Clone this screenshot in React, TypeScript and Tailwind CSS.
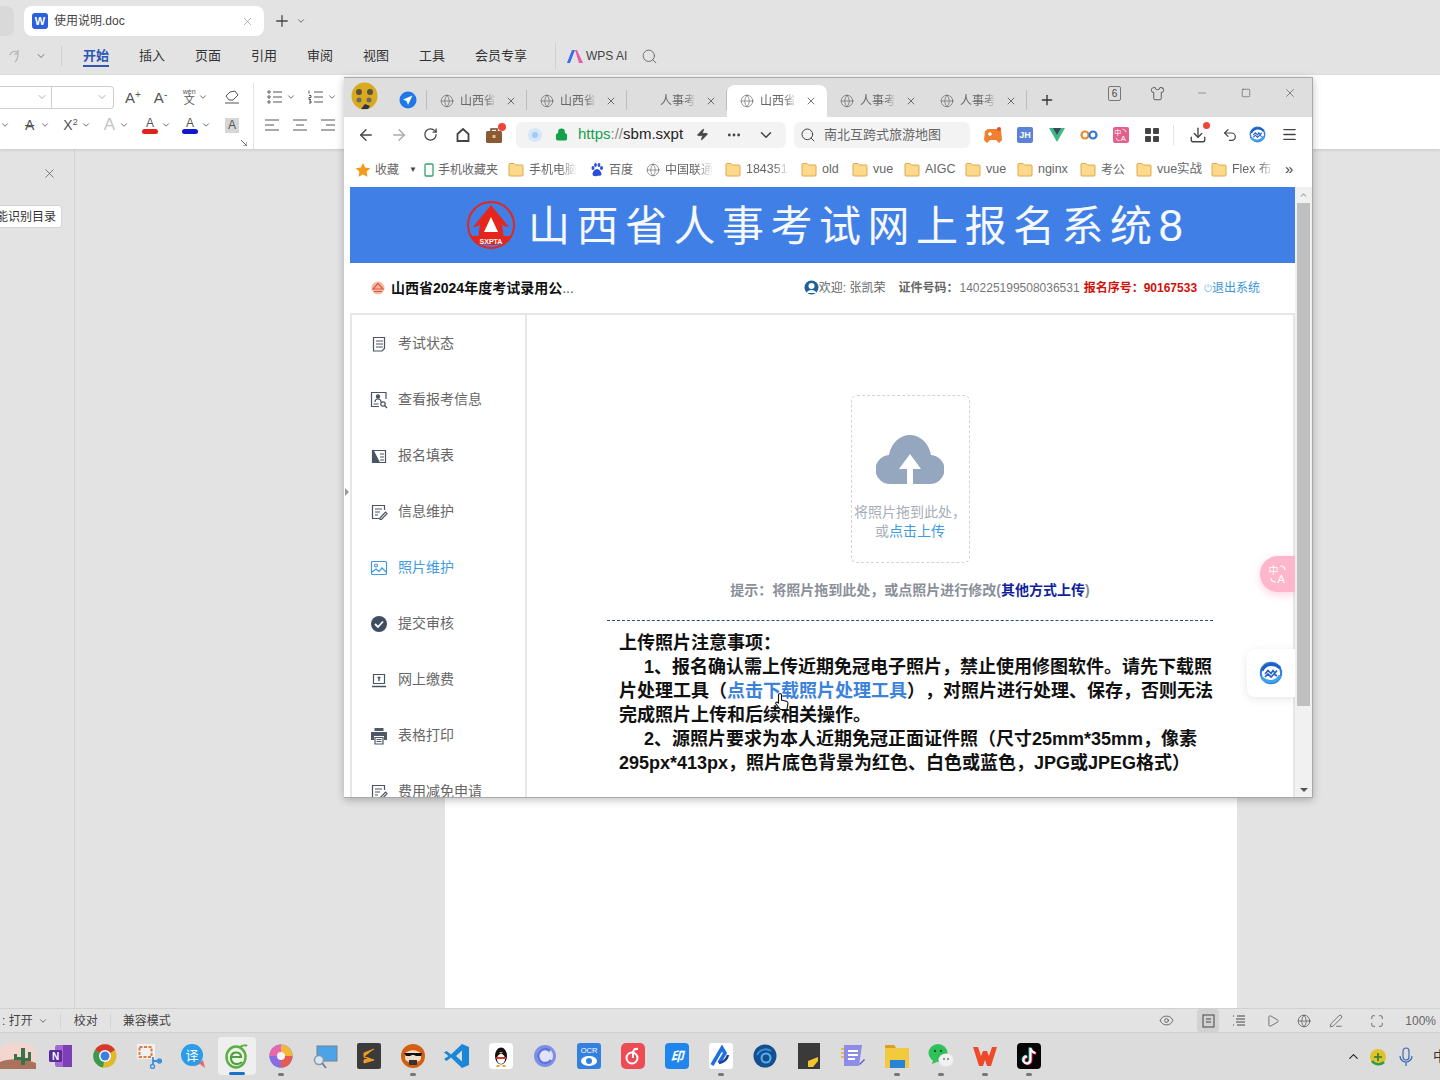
import type { ReactNode } from 'react';
import {
  ArrowLeft, ArrowRight, ChevronDown, ChevronUp, Download, Ellipsis, Eye, Globe, Lock, Maximize, Menu, Minus,
  PenLine, Play, Plus, RotateCw, Search, Shirt, Square, Undo2, X, Zap,
} from 'lucide-react';

const font = "font-['Liberation_Sans','Noto_Sans_CJK_SC',sans-serif] [text-spacing-trim:space-all]";

const ribbonTabs = [
  { label: '开始', width: 'w-[56px]' },
  { label: '插入', width: 'w-[56px]' },
  { label: '页面', width: 'w-[56px]' },
  { label: '引用', width: 'w-[56px]' },
  { label: '审阅', width: 'w-[56px]' },
  { label: '视图', width: 'w-[56px]' },
  { label: '工具', width: 'w-[56px]' },
  { label: '会员专享', width: 'w-[70px]' },
];

const Chev = () => <ChevronDown size={10} strokeWidth={2} className="text-[#555]" />;

const Lines = ({ kind }: { kind: 'bullet' | 'number' | 'left' | 'center' | 'right' }) => (
  <svg width="16" height="14" viewBox="0 0 16 14" fill="none" stroke="#555" strokeWidth="1">
    {kind === 'bullet' && (
      <>
        <circle cx="2" cy="2" r="1.2" /><circle cx="2" cy="7" r="1.2" /><circle cx="2" cy="12" r="1.2" />
        <path d="M6 2h9M6 7h9M6 12h9" />
      </>
    )}
    {kind === 'number' && (
      <>
        <path d="M1 0.5v3M1 5.5h2v2H1v2h2M1 11h2v2H1" />
        <path d="M6 2h9M6 7h9M6 12h9" />
      </>
    )}
    {kind === 'left' && <path d="M1 2h14M1 7h9M1 12h14" />}
    {kind === 'center' && <path d="M1 2h14M4 7h8M1 12h14" />}
    {kind === 'right' && <path d="M1 2h14M6 7h9M1 12h14" />}
  </svg>
);

const Folder = () => (
  <svg width="16" height="15" viewBox="0 0 16 15" className="shrink-0">
    <path d="M1 2.500a1 1 0 0 1 1-1h4l1.500 1.500H14a1 1 0 0 1 1 1v9a1 1 0 0 1-1 1H2a1 1 0 0 1-1-1z" fill="#fdd98c" stroke="#e0a84a" />
  </svg>
);

const Translate = ({ color, size }: { color: string; size: number }) => (
  <svg width={size} height={size} viewBox="0 0 20 20" fill="none">
    <text x="0.500" y="9.500" fontSize="10" fill={color}>中</text>
    <text x="9.500" y="19" fontSize="11" fill={color}>A</text>
    <path d="M12 2c3 0 5 1.500 5 4M8 18c-3 0-5-1.500-5-4" stroke={color} strokeWidth="1.200" />
  </svg>
);

// each item is as wide as the distance to the next bookmark
const bookmarks: { label: string; width: string; labelWidth?: string; latin?: boolean; icon: ReactNode }[] = [
  { label: '手机电脑', width: 'w-[82px]', labelWidth: 'w-[48px]', icon: <Folder /> },
  {
    label: '百度', width: 'w-[56px]', icon: (
      <svg width="14" height="14" viewBox="0 0 14 14" fill="#2b4fd8" className="shrink-0">
        <ellipse cx="3" cy="5" rx="1.500" ry="2" /><ellipse cx="5.500" cy="2" rx="1.400" ry="1.900" /><ellipse cx="9" cy="2" rx="1.400" ry="1.900" /><ellipse cx="11.500" cy="5" rx="1.500" ry="2" />
        <path d="M7 6c-2 0-4.500 3-4.500 5 0 2 2 2.500 4.500 2s4.500 0 4.500-2c0-2-2.500-5-4.500-5z" />
      </svg>
    ),
  },
  { label: '中国联通', width: 'w-[79px]', labelWidth: 'w-[48px]', icon: <Globe size={14} strokeWidth={1} className="text-[#555] shrink-0" /> },
  { label: '184351', width: 'w-[76px]', labelWidth: 'w-[43px]', latin: true, icon: <Folder /> },
  { label: 'old', width: 'w-[51px]', latin: true, icon: <Folder /> },
  { label: 'vue', width: 'w-[52px]', latin: true, icon: <Folder /> },
  { label: 'AIGC', width: 'w-[61px]', latin: true, icon: <Folder /> },
  { label: 'vue', width: 'w-[52px]', latin: true, icon: <Folder /> },
  { label: 'nginx', width: 'w-[63px]', latin: true, icon: <Folder /> },
  { label: '考公', width: 'w-[56px]', icon: <Folder /> },
  { label: 'vue实战', width: 'w-[75px]', latin: true, icon: <Folder /> },
  { label: 'Flex 布', width: 'w-[74px]', labelWidth: 'w-[42px]', latin: true, icon: <Folder /> },
];

const browserTabs = [
  { label: '山西省', globe: true, sep: true },
  { label: '山西省', globe: true, sep: true },
  { label: '人事考', globe: false, sep: true },
  { label: '山西省', globe: true, active: true },
  { label: '人事考', globe: true },
  { label: '人事考', globe: true, sep: true },
];

const side = (children: ReactNode) => (
  <svg width="18" height="18" viewBox="0 0 18 18" fill="none" stroke="currentColor" strokeWidth="1.2">{children}</svg>
);

const menu: { label: string; active?: boolean; icon: ReactNode }[] = [
  { label: '考试状态', icon: side(<><path d="M3.500 2.500h11v11l-2.500 2.500H3.500z" /><path d="M6 6h7M6 9h7M6 12h7" /></>) },
  {
    label: '查看报考信息', icon: side(
      <>
        <path d="M16 8V1.500H1.500v14H9" />
        <circle cx="8" cy="5.500" r="1.600" fill="currentColor" />
        <path d="M5 11c0-4 6-4 6 0M3.500 13h5" />
        <circle cx="13" cy="13" r="2.200" /><path d="M14.500 14.500 17 17" />
      </>,
    ),
  },
  { label: '报名填表', icon: side(<><path d="M2.500 3.500h13v12h-13z" /><path d="M3 3l6 12H3z" fill="currentColor" /><path d="M10 7h4M10 10h4M10 13h4" /></>) },
  { label: '信息维护', icon: side(<><path d="M14.500 7V2.500h-12v13h7" /><path d="M5 6h7M5 9h5M5 12h3" /><path d="m10 15 5.500-6 1.500 1.500-5.500 6H10z" /></>) },
  { label: '照片维护', active: true, icon: side(<><rect x="1.500" y="2.500" width="15" height="13" rx="1" /><circle cx="6" cy="6.500" r="1.500" /><path d="m2 13 4-3 3 2.500 3-3.500 4 4" /></>) },
  {
    label: '提交审核', icon: (
      <svg width="18" height="18" viewBox="0 0 18 18"><circle cx="9" cy="9" r="8" fill="#3f4d63" /><path d="m5 9 3 3 5-5.500" fill="none" stroke="#fff" strokeWidth="1.800" /></svg>
    ),
  },
  { label: '网上缴费', icon: side(<><path d="M3.500 3.500h11v9h-11z" /><path d="M2 15.500h14" strokeWidth="1.500" /><path d="M9 6v4M7.500 6.500h3" strokeWidth="1.500" /></>) },
  {
    label: '表格打印', icon: (
      <svg width="18" height="18" viewBox="0 0 18 18" fill="#4d5868">
        <path d="M4.500 1h9v3h-9z" /><path d="M1 5h16v8h-3V9H4v4H1z" />
        <path d="M5 10.500h8v6.500H5z" fill="none" stroke="#4d5868" strokeWidth="1.200" /><path d="M6.500 12.500h5M6.500 14.500h5" stroke="#4d5868" />
      </svg>
    ),
  },
  { label: '费用减免申请', icon: side(<><path d="M14.500 7V2.500h-12v13h7" /><path d="M5 6h7M5 9h5M5 12h3" /><path d="m10 15 5.500-6 1.500 1.500-5.500 6H10z" /></>) },
];

const BlueLogo = ({ size }: { size: number }) => (
  <svg width={size} height={size} viewBox="0 0 24 24" fill="none">
    <circle cx="12" cy="12" r="10.200" stroke="#2f7fe0" strokeWidth="2" />
    <path d="M3 9.500C6 3 15 1 21 7" stroke="#1c5fc9" strokeWidth="3" />
    <path d="M21 14.500C18 21 9 23 3 17" stroke="#3fa3ea" strokeWidth="3" />
    <path d="m6 13 3-3.500 3 3 2-3 2 2.500 2-2.500M6 16l3-3 3 3 3-3 3 2" stroke="#2560c8" strokeWidth="1.600" />
  </svg>
);

const dock: { dot?: boolean; active?: boolean; icon: ReactNode }[] = [
  {
    icon: (
      <svg width="38" height="26" viewBox="0 0 38 26">
        <rect width="38" height="26" rx="13" fill="#f2d6cf" />
        <path d="M0 20c8-5 25-5 38 0v6H0z" fill="#a8725c" />
        <path d="M23 22V5h4v17zM19 14h4v3h-7v-6h3zM27 15h3v-6h3v9h-6z" fill="#3c7048" />
      </svg>
    ),
  },
  {
    icon: (
      <svg width="26" height="26" viewBox="0 0 26 26">
        <rect x="7" y="2" width="17" height="22" rx="2" fill="#a46ad0" /><rect x="15" y="2" width="9" height="22" fill="#7c3fb5" />
        <rect x="1" y="7" width="13" height="12" rx="1.500" fill="#5c2a9d" />
        <text x="7.500" y="16.500" fontSize="10" fontWeight="700" fill="#fff" textAnchor="middle">N</text>
      </svg>
    ),
  },
  {
    icon: (
      <svg width="26" height="26" viewBox="0 0 26 26">
        <circle cx="13" cy="13" r="11.500" fill="#e0b92c" />
        <path d="M13 13 3 7A11.500 11.500 0 0 1 23 7z" fill="#d6392c" />
        <path d="M13 13 3 7a11.500 11.500 0 0 0 8 17.500z" fill="#3c9a4e" />
        <circle cx="13" cy="13" r="6" fill="#fff" /><circle cx="13" cy="13" r="4.500" fill="#3d7fe0" />
      </svg>
    ),
  },
  {
    icon: (
      <svg width="26" height="26" viewBox="0 0 26 26" fill="none">
        <rect x="1" y="1" width="18" height="15" fill="#f1f1f1" />
        <rect x="3.500" y="4" width="12" height="10" stroke="#e07b3c" strokeWidth="2" strokeDasharray="3 1.500" />
        <path d="M17 14v8M17 18h8" stroke="#3c8ed8" strokeWidth="1.800" /><circle cx="16.500" cy="23.500" r="2" stroke="#3c8ed8" strokeWidth="1.300" /><circle cx="23.500" cy="18" r="2" stroke="#3c8ed8" strokeWidth="1.300" />
      </svg>
    ),
  },
  {
    icon: (
      <svg width="26" height="26" viewBox="0 0 26 26">
        <path d="M13 24 20 21 25 25 23 17z" fill="#e06a6a" /><circle cx="12" cy="12" r="11" fill="#2a9ce8" />
        <text x="12" y="17" fontSize="13" fill="#fff" textAnchor="middle">译</text>
      </svg>
    ),
  },
  {
    active: true, icon: (
      <svg width="24" height="26" viewBox="0 0 24 26" fill="none">
        <ellipse cx="11" cy="14" rx="9.500" ry="10.500" fill="#eef6e8" stroke="#5dae46" strokeWidth="2.500" />
        <path d="M6 14h10c0-6-9-6-10 0zm0 1c0 6 6 8 11 4" stroke="#4f9f3c" strokeWidth="2.200" />
        <path d="M15 4c3-2 6-2 7-1" stroke="#5dae46" strokeWidth="2" />
      </svg>
    ),
  },
  {
    dot: true, icon: (
      <svg width="26" height="26" viewBox="0 0 26 26">
        <circle cx="13" cy="13" r="11.500" fill="#3a8be8" />
        <path d="M13 13V1.500A11.500 11.500 0 0 1 24.500 13z" fill="#f2b638" />
        <path d="M13 13h11.500A11.500 11.500 0 0 1 13 24.500z" fill="#e85a50" />
        <path d="M13 13v11.500A11.500 11.500 0 0 1 1.500 13z" fill="#8c6be0" />
        <path d="M13 13H1.500A11.500 11.500 0 0 1 13 1.500z" fill="#e868b0" />
        <circle cx="13" cy="13" r="4" fill="#f4f4f4" />
      </svg>
    ),
  },
  {
    icon: (
      <svg width="26" height="26" viewBox="0 0 26 26" fill="none">
        <rect x="5" y="3" width="20" height="15" fill="#4ba3e8" stroke="#78808a" />
        <circle cx="7" cy="17" r="4.500" fill="#d7e8f5" stroke="#8a97a3" strokeWidth="1.500" /><path d="m10 20 4 5" stroke="#77828d" strokeWidth="2" />
      </svg>
    ),
  },
  {
    icon: (
      <svg width="26" height="26" viewBox="0 0 26 26">
        <rect x="1" y="0" width="24" height="26" rx="2" fill="#3b3b3b" />
        <path d="M18 6 8 10v4l10 3-10 3v-3l6-1.500L8 14" fill="#f39c1f" stroke="#f39c1f" strokeWidth="1" />
      </svg>
    ),
  },
  {
    dot: true, icon: (
      <svg width="26" height="26" viewBox="0 0 26 26">
        <circle cx="13" cy="13" r="12" fill="#d4600f" /><path d="M5 11c3-5 13-5 16 0v5c-3 5-13 5-16 0z" fill="#f0dcc8" />
        <path d="M4 10h18l-1 3h-5l-2-1h-2l-2 1H6z" fill="#111" /><rect x="9" y="17" width="8" height="5" fill="#333" />
      </svg>
    ),
  },
  {
    icon: (
      <svg width="26" height="26" viewBox="0 0 26 26">
        <path d="M18 1l7 3v18l-7 3-11-10.500-4.500 3.500L0 16l4.500-3L0 9.500 2.500 8 7 11.500zm0 6.500-6 5.500 6 5.500z" fill="#1a86d8" />
      </svg>
    ),
  },
  {
    icon: (
      <svg width="26" height="26" viewBox="0 0 26 26">
        <rect width="24" height="26" x="1" rx="4" fill="#fff" />
        <ellipse cx="13" cy="13" rx="6" ry="8.500" fill="#111" /><ellipse cx="13" cy="16" rx="4" ry="5" fill="#fff" />
        <path d="M11 9h4l-2 2z" fill="#f0a020" /><path d="M9 22h3l-1 2H8zM14 22h3l1 2h-3z" fill="#f0a020" /><path d="M8 14h10v2H8z" fill="#d8322a" />
      </svg>
    ),
  },
  {
    icon: (
      <svg width="26" height="26" viewBox="0 0 26 26" fill="none">
        <circle cx="13" cy="13" r="11" fill="#7f8fe8" /><circle cx="13" cy="13" r="8" fill="#dfe4fb" />
        <path d="M18 8a7 7 0 1 0 1 9" stroke="#6272dc" strokeWidth="2.500" />
      </svg>
    ),
  },
  {
    icon: (
      <svg width="26" height="26" viewBox="0 0 26 26">
        <rect width="24" height="26" x="1" rx="3" fill="#3480e0" />
        <text x="13" y="10" fontSize="7.500" fill="#fff" textAnchor="middle">OCR</text>
        <ellipse cx="13" cy="18" rx="8" ry="5" fill="#fff" /><circle cx="13" cy="18" r="3" fill="#3480e0" />
      </svg>
    ),
  },
  {
    icon: (
      <svg width="26" height="26" viewBox="0 0 26 26" fill="none">
        <rect width="24" height="26" x="1" rx="5" fill="#ee4c55" />
        <circle cx="12" cy="15" r="5.500" stroke="#fff" strokeWidth="2" /><path d="M13 15c0-5-1-10 5-9" stroke="#fff" strokeWidth="2" />
      </svg>
    ),
  },
  {
    icon: (
      <svg width="26" height="26" viewBox="0 0 26 26">
        <rect width="24" height="26" x="1" rx="4" fill="#1f86ee" />
        <text x="13" y="18" fontSize="13" fontWeight="700" fontStyle="italic" fill="#fff" textAnchor="middle">印</text>
      </svg>
    ),
  },
  {
    dot: true, icon: (
      <svg width="26" height="26" viewBox="0 0 26 26" fill="none">
        <rect width="24" height="26" x="1" rx="3" fill="#fff" />
        <path d="M4 22 14 5l3 5-6 10" stroke="#1f6fe0" strokeWidth="3.500" /><path d="M11 20c5-1 8-4 9-8" stroke="#1c3f8f" strokeWidth="2.500" />
      </svg>
    ),
  },
  {
    icon: (
      <svg width="26" height="26" viewBox="0 0 26 26" fill="none">
        <circle cx="13" cy="13" r="11.500" fill="#12508f" /><circle cx="14" cy="15" r="4.500" stroke="#5ab0ec" strokeWidth="2" />
        <path d="M5 12c3-6 9-7 14-4" stroke="#3b90d8" strokeWidth="2" />
      </svg>
    ),
  },
  {
    icon: (
      <svg width="26" height="26" viewBox="0 0 26 26">
        <rect x="2" y="0" width="22" height="26" fill="#3a3a3a" /><path d="M12 24V18l10-4v4l-5 6z" fill="#f2c42e" />
      </svg>
    ),
  },
  {
    icon: (
      <svg width="26" height="26" viewBox="0 0 26 26" fill="none">
        <path d="M4 2h18l-3 21H4z" fill="#8d8ce6" /><path d="M8 8h10M8 12h10M8 16h7" stroke="#fff" strokeWidth="1.800" />
        <path d="M1 6h3M1 10h3M1 14h3" stroke="#e9b64a" strokeWidth="2" /><path d="m19 21 5-5 1 1-5 5z" fill="#5d5cd0" />
      </svg>
    ),
  },
  {
    dot: true, icon: (
      <svg width="26" height="26" viewBox="0 0 26 26">
        <path d="M1 2h9l2 3h13v20H1z" fill="#f3ca3e" /><path d="M1 2h9l2 3H1z" fill="#dd9e23" /><rect x="6" y="17" width="15" height="8" fill="#2684d8" />
      </svg>
    ),
  },
  {
    dot: true, icon: (
      <svg width="26" height="26" viewBox="0 0 26 26">
        <ellipse cx="10" cy="10" rx="9.500" ry="9" fill="#2fc15a" /><path d="m5 17-1 4 5-2z" fill="#2fc15a" />
        <circle cx="7" cy="8" r="1.200" fill="#0c5a28" /><circle cx="13" cy="8" r="1.200" fill="#0c5a28" />
        <ellipse cx="18" cy="17" rx="7.500" ry="6.500" fill="#f1f1f1" /><circle cx="16" cy="16" r="1" fill="#777" /><circle cx="20" cy="16" r="1" fill="#777" />
      </svg>
    ),
  },
  {
    dot: true, icon: (
      <svg width="26" height="26" viewBox="0 0 26 26">
        <path d="M1 4h5l3 9 2-5h4l2 5 3-9h5l-6 19h-4l-2-6-2 6H7z" fill="#ee4a2a" />
      </svg>
    ),
  },
  {
    dot: true, icon: (
      <svg width="26" height="26" viewBox="0 0 26 26" fill="none">
        <rect width="24" height="26" x="1" rx="4" fill="#050505" />
        <path d="M14.500 5v12a3.500 3.500 0 1 1-3.500-3.500M14.500 5c.5 3 2.500 4.500 5 5" stroke="#2de4e8" strokeWidth="2.400" transform="translate(-0.700 -0.500)" />
        <path d="M14.500 5v12a3.500 3.500 0 1 1-3.500-3.500M14.500 5c.5 3 2.500 4.500 5 5" stroke="#fe2c55" strokeWidth="2.400" transform="translate(0.700 0.500)" />
        <path d="M14.500 5v12a3.500 3.500 0 1 1-3.500-3.500M14.500 5c.5 3 2.500 4.500 5 5" stroke="#fff" strokeWidth="2" />
      </svg>
    ),
  },
];

const BrowserWindow = () => (
  <div className="absolute z-20 left-[344px] top-[77px] w-[969px] h-[721px] flex flex-col bg-white border-t border-r border-b border-[#a9a9a9] shadow-[0_2px_8px_rgba(0,0,0,0.25)]">
    {/* Tabs */}
    <div className="h-[39px] bg-[#dedede] flex items-end pl-[6px] shrink-0">
      <svg width="27" height="28" viewBox="0 0 27 28" className="mb-[7px] ml-[1px] shrink-0">
        <ellipse cx="13.500" cy="14" rx="13" ry="13.500" fill="#d9a920" />
        <circle cx="8" cy="10" r="3" fill="#5a5040" /><circle cx="19" cy="10" r="3" fill="#5a5040" />
        <circle cx="8" cy="18" r="2.500" fill="#6b6a62" /><circle cx="18" cy="18" r="2.500" fill="#6b6a62" />
        <path d="M10 27l4-5 5 2-2 3z" fill="#2b3350" />
      </svg>
      <svg width="18" height="18" viewBox="0 0 18 18" className="ml-[21px] mb-[8px] shrink-0">
        <circle cx="9" cy="9" r="8.500" fill="#1e78e8" />
        <path d="M13.500 4.500 4 8.500l3.500 1.500L9 14z" fill="#fff" />
      </svg>
      <div className="w-px h-[20px] bg-[#bdbdbd] ml-[9px] mb-[7px]" />
      {browserTabs.map((t, i) => (
        <div key={i} className={`w-[100px] h-[32px] flex items-center shrink-0 relative ${t.active ? 'bg-white rounded-t-lg' : ''}`}>
          {t.globe && <Globe size={14} strokeWidth={1} className="absolute left-[13px] text-[#555]" />}
          <span className="absolute left-[33px] w-[36px] overflow-hidden whitespace-nowrap text-[12px] text-[#666] [mask-image:linear-gradient(90deg,#000_70%,transparent)]">{t.label}</span>
          <X size={12} strokeWidth={1.5} className="absolute left-[78px] text-[#444]" />
          {t.sep && <div className="absolute right-0 top-[5px] w-px h-[20px] bg-[#bdbdbd]" />}
        </div>
      ))}
      <div className="ml-[12px] mb-[9px] shrink-0"><Plus size={16} strokeWidth={2} className="text-[#333]" /></div>
      <div className="flex-1 self-start flex items-center justify-end h-[28px] pt-[2px] pr-[15px] text-[#444]">
        <span className="w-[13px] h-[15px] border border-[#777] rounded-[2px] text-[10px] leading-[13px] text-center">6</span>
        <Shirt size={15} strokeWidth={1.3} className="ml-[29px]" />
        <Minus size={12} strokeWidth={1} className="ml-[31px]" />
        <Square size={10} strokeWidth={1.3} className="ml-[33px]" />
        <X size={14} strokeWidth={1} className="ml-[32px]" />
      </div>
    </div>

    {/* Address bar */}
    <div className="h-[35px] flex items-center pl-[13px] text-[#444] shrink-0">
      <ArrowLeft size={18} strokeWidth={1.8} />
      <ArrowRight size={18} strokeWidth={1.8} className="ml-[15px] text-[#aaa]" />
      <RotateCw size={15} strokeWidth={2} className="ml-[15px]" />
      <svg width="16" height="16" viewBox="0 0 16 16" fill="none" stroke="currentColor" strokeWidth="1.800" className="ml-[17px] shrink-0"><path d="M2.500 7 8 2l5.500 5v7h-11z" /></svg>
      <div className="ml-[14px] relative">
        <svg width="18" height="18" viewBox="0 0 18 18" className="block">
          <rect x="1" y="5" width="16" height="12" rx="1.500" fill="#8a5a33" /><path d="M6 5V3h6v2" fill="none" stroke="#6a4525" strokeWidth="1.500" /><rect x="7.500" y="9" width="3" height="3" fill="#e3c08e" />
        </svg>
        <span className="absolute -top-[3px] -right-[3px] w-[8px] h-[8px] rounded-full bg-[#f04438]" />
      </div>
      <div className="ml-[13px] w-[270px] h-[26px] bg-[#f3f3f3] rounded-[6px] flex items-center pl-[12px] shrink-0">
        <span className="w-[14px] h-[14px] rounded-full bg-[#d6e6fb] flex items-center justify-center"><span className="w-[6px] h-[6px] rounded-full bg-[#a8c8f4]" /></span>
        <Lock size={13} strokeWidth={2.500} className="ml-[13px] text-[#12a14b]" fill="#12a14b" />
        <span className="ml-[10px] text-[15px] text-[#222]"><span className="text-[#12a14b]">https</span><span className="text-[#888]">://</span>sbm.sxpt</span>
        <Zap size={13} strokeWidth={1.500} className="ml-[13px]" fill="#444" />
        <Ellipsis size={16} strokeWidth={2.200} className="ml-[17px]" />
        <ChevronDown size={18} strokeWidth={2} className="ml-[15px]" />
      </div>
      <div className="ml-[8px] w-[176px] h-[26px] bg-[#f3f3f3] rounded-[6px] flex items-center pl-[6px] shrink-0">
        <Search size={16} strokeWidth={1.500} />
        <span className="ml-[8px] text-[13px] text-[#666] whitespace-nowrap">南北互跨式旅游地图</span>
      </div>
      <svg width="20" height="18" viewBox="0 0 20 18" className="ml-[13px] shrink-0">
        <path d="M5 3h9l4 1 1 10-3 3-3-3H7l-3 3-3-3 1-9z" fill="#f08030" /><path d="M5 8h4M7 6v4" stroke="#fff" strokeWidth="1.500" /><circle cx="16" cy="3" r="2" fill="#e84a30" />
      </svg>
      <span className="ml-[14px] w-[16px] h-[16px] rounded-[2px] bg-[#5b82d8] text-white text-[9px] font-bold leading-[16px] text-center shrink-0">JH</span>
      <svg width="16" height="16" viewBox="0 0 16 16" className="ml-[16px] shrink-0">
        <path d="M0 1h16L8 15z" fill="#41b883" /><path d="M4 1h8L8 8z" fill="#35495e" />
      </svg>
      <svg width="18" height="12" viewBox="0 0 18 12" fill="none" strokeWidth="2.200" className="ml-[15px] shrink-0">
        <circle cx="5" cy="6" r="3.500" stroke="#e88a30" /><circle cx="13" cy="6" r="3.500" stroke="#3178d8" />
      </svg>
      <span className="ml-[15px] w-[16px] h-[16px] rounded-[2px] bg-[#e4608c] flex items-center justify-center shrink-0"><Translate color="#fff" size={14} /></span>
      <div className="ml-[16px] grid grid-cols-2 gap-[2px] shrink-0">
        <span className="w-[6px] h-[6px] bg-[#444] rounded-[1px]" /><span className="w-[6px] h-[6px] bg-[#444] rounded-[1px]" />
        <span className="w-[6px] h-[6px] bg-[#444] rounded-[1px]" /><span className="w-[6px] h-[6px] bg-[#444] rounded-[1px]" />
      </div>
      <div className="w-px h-[20px] bg-[#e4e4e4] ml-[14px]" />
      <div className="ml-[15px] relative">
        <Download size={18} strokeWidth={1.800} className="block" />
        <span className="absolute -top-[4px] right-[-3px] w-[7px] h-[7px] rounded-full bg-[#f04438]" />
      </div>
      <Undo2 size={16} strokeWidth={1.800} className="ml-[15px]" />
      <div className="ml-[11px]"><BlueLogo size={17} /></div>
      <Menu size={17} strokeWidth={1.800} className="ml-[15px]" />
    </div>

    {/* Bookmarks */}
    <div className="h-[35px] flex items-center pl-[11px] text-[12px] text-[#666] whitespace-nowrap shrink-0">
      <svg width="16" height="16" viewBox="0 0 16 16" className="shrink-0"><path d="M8 1l2.200 4.600 5 .7-3.600 3.500.9 5L8 12.400 3.500 14.800l.9-5L.8 6.300l5-.7z" fill="#f49a1a" /></svg>
      <span className="ml-[4px]">收藏</span>
      <span className="ml-[10px] text-[8px] text-[#444]">▼</span>
      <svg width="10" height="14" viewBox="0 0 10 14" fill="none" className="ml-[7px] shrink-0"><rect x="1" y="1" width="8" height="12" rx="1" stroke="#2fa56a" strokeWidth="1.300" /></svg>
      <span className="ml-[4px] mr-[10px]">手机收藏夹</span>
      {bookmarks.map((b, i) => (
        <div key={i} className={`flex items-center gap-[5px] shrink-0 ${b.width}`}>
          {b.icon}
          <span className={`${b.labelWidth ?? ''} overflow-hidden ${b.latin ? 'text-[12.5px]' : ''} ${b.labelWidth ? '[mask-image:linear-gradient(90deg,#000_65%,transparent)]' : ''}`}>{b.label}</span>
        </div>
      ))}
      <span className="text-[15px] text-[#444]">»</span>
    </div>

    {/* Page */}
    <div className="flex-1 min-h-0 flex pl-[6px] relative">
      <span className="absolute left-[1px] top-[301px] w-0 h-0 border-y-[4px] border-y-transparent border-l-[4px] border-l-[#999]" />
      <div className="flex-1 min-w-0 flex flex-col overflow-hidden relative">
        <div className="h-[76px] bg-[#4080e6] flex items-center pl-[116px] shrink-0">
          <svg width="50" height="50" viewBox="0 0 50 50" fill="none" className="shrink-0">
            <circle cx="25" cy="25" r="23" stroke="#e5261c" strokeWidth="2" />
            <path d="M25 5 7 27c4 0 6-1 7-3l-2 15h26l-2-15c1 2 3 3 7 3z" fill="#e5261c" />
            <path d="m25 17-7 15h14z" fill="#fff" />
            <path d="M4 36c4 12 38 12 42 0z" fill="#e5261c" />
            <text x="25" y="44" fontSize="7" fontWeight="700" fill="#fff" textAnchor="middle">SXPTA</text>
          </svg>
          <h1 className="ml-[12px] text-[42px] leading-none tracking-[6.500px] text-[#f6f8ff] font-['Noto_Sans_CJK_SC',sans-serif] whitespace-nowrap">山西省人事考试网上报名系统<span className="text-[44px] font-['Liberation_Sans',sans-serif]">8</span></h1>
        </div>
        <div className="h-[50px] flex items-center pl-[21px] text-[12px] text-[#666] whitespace-nowrap shrink-0">
          <svg width="14" height="14" viewBox="0 0 14 14" fill="none" className="shrink-0">
            <circle cx="7" cy="7" r="6.500" fill="#f5b8a4" /><path d="M2 8 7 2.500 12 8zM3 10.500h8" stroke="#d85c3c" strokeWidth="1.200" />
          </svg>
          <span className="ml-[6px] text-[14px] font-bold text-[#111]">山西省2024年度考试录用公<span className="font-normal text-[#555]">...</span></span>
          <svg width="15" height="16" viewBox="0 0 15 16" className="ml-[230px] shrink-0"><circle cx="7.500" cy="7.500" r="7" fill="#1f5f99" /><circle cx="7.500" cy="6" r="3" fill="#fff" /><path d="M2.500 13c1-4 9-4 10 0z" fill="#fff" /></svg>
          <span>欢迎: 张凯荣</span>
          <span className="ml-[13px] font-bold">证件号码：</span>
          <span className="ml-[1px] text-[#777]">140225199508036531</span>
          <span className="ml-[4px] font-bold text-[#d0120a]">报名序号：</span>
          <span className="font-bold text-[#d0120a]">90167533</span>
          <span className="ml-[7px] text-[#8cbfe6] text-[10px]">⏻</span>
          <span className="text-[#3a96d8]">退出系统</span>
        </div>
        <div className="flex-1 min-h-0 flex border-t-2 border-[#e6e6e6]">
          <aside className="w-[177px] shrink-0 border-l-2 border-r-2 border-[#e6e6e6] overflow-hidden">
            {menu.map((m) => (
              <div key={m.label} className={`h-[56px] pt-[18px] pl-[18px] flex items-start gap-[10px] text-[14px] leading-[20px] whitespace-nowrap ${m.active ? 'text-[#3f9ae0]' : 'text-[#666]'}`}>
                <span className={`mt-[2px] ${m.active ? '' : 'text-[#4a5463]'}`}>{m.icon}</span>
                {m.label}
              </div>
            ))}
          </aside>
          <main className="flex-1 min-w-0 flex flex-col items-center pt-[80px] border-r-2 border-[#e6e6e6]">
            <div className="w-[119px] h-[168px] border border-dashed border-[#d4d4d4] rounded-md flex flex-col items-center pt-[38px] text-[14px] leading-[19px] text-[#a7adba] whitespace-nowrap">
              <svg width="68" height="52" viewBox="0 0 68 52">
                <path d="M15 50a14.500 14.500 0 0 1-2-29C15 9 24 1 34 1s19 8 21 20a14.500 14.500 0 0 1-2 29z" fill="#95a7bf" />
                <path d="M34 20 23 35h8v15h6V35h8z" fill="#fff" />
              </svg>
              <p className="mt-[17px] w-full text-center">将照片拖到此处，</p>
              <p>或<span className="text-[#3f9ae0]">点击上传</span></p>
            </div>
            <p className="mt-[18px] text-[14px] font-bold leading-[18px] text-[#8a8f99] whitespace-nowrap">
              提示：将照片拖到此处，或点照片进行修改(<span className="text-[#101f9c]">其他方式上传</span>)
            </p>
            <div className="mt-[21px] w-[606px] border-t border-dashed border-[#24526f] pt-[10px] pl-[12px] text-[18px] font-bold leading-[24px] text-[#111]">
              <p>上传照片注意事项：</p>
              <p className="indent-[25px]">1、报名确认需上传近期免冠电子照片，禁止使用修图软件。请先下载照片处理工具（<span className="text-[#3c82dc]">点击下载照片处理工具</span>），对照片进行处理、保存，否则无法完成照片上传和后续相关操作。</p>
              <p className="indent-[25px]">2、源照片要求为本人近期免冠正面证件照（尺寸25mm*35mm，像素295px*413px，照片底色背景为红色、白色或蓝色，JPG或JPEG格式）</p>
            </div>
          </main>
        </div>
        {/* Floating buttons */}
        <div className="absolute right-0 top-[369px] w-[35px] h-[36px] rounded-l-[18px] bg-[#fdb6cb] shadow-[0_3px_8px_rgba(253,182,203,0.6)] flex items-center justify-center"><Translate color="#fff" size={20} /></div>
        <div className="absolute right-0 top-[462px] w-[48px] h-[48px] rounded-l-lg bg-white shadow-[0_2px_10px_rgba(0,0,0,0.1)] flex items-center justify-center"><BlueLogo size={24} /></div>
        {/* Mouse pointer */}
        <svg width="16" height="20" viewBox="0 0 16 20" className="absolute left-[425px] top-[505px]">
          <path d="M5 1.500c1 0 1.500.7 1.500 1.500v5l5 1.200c1 .3 1.500 1 1.500 2l-.8 5c-.1.8-.7 1.300-1.500 1.300H6c-.5 0-1-.2-1.300-.7L1 12c-.8-1.300.7-2.500 1.800-1.500L3.500 11V3c0-.8.600-1.500 1.500-1.500z" fill="#fff" stroke="#111" strokeWidth="1.100" />
        </svg>
      </div>
      {/* Scrollbar */}
      <div className="w-[17px] shrink-0 bg-[#f1f1f1] flex flex-col items-center">
        <ChevronUp size={9} strokeWidth={3} className="h-[16px] text-[#aaa]" />
        <div className="w-[13px] h-[503px] bg-[#c0c0c0]" />
        <div className="flex-1" />
        <span className="mb-[5px] w-0 h-0 border-x-[4px] border-x-transparent border-t-[4px] border-t-[#555]" />
      </div>
    </div>
  </div>
);

export default function App() {
  return (
    <div className={`${font} relative w-[1440px] h-[1080px] overflow-hidden bg-[#e3e3e3] flex flex-col`}>
      {/* WPS title bar */}
      <div className="h-[37px] flex items-end pb-px shrink-0">
        <div className="w-[14px] h-[30px] rounded-r-lg bg-[#d9d9d9]" />
        <div className="ml-[10px] w-[240px] h-[30px] bg-white rounded-lg flex items-center pl-[8px] pr-[10px]">
          <span className="w-[16px] h-[16px] rounded-[3px] bg-[#2b5fdc] text-white text-[11px] font-bold leading-[16px] text-center">W</span>
          <span className="ml-[6px] flex-1 text-[12px] text-[#444]">使用说明.doc</span>
          <X size={13} strokeWidth={1} className="text-[#777]" />
        </div>
        <Plus size={18} strokeWidth={1.700} className="ml-[9px] mb-[6px] text-[#444]" />
        <ChevronDown size={10} strokeWidth={2} className="ml-[5px] mb-[10px] text-[#555]" />
      </div>

      {/* Ribbon tabs */}
      <div className="h-[38px] flex items-center shrink-0 text-[13px] text-[#333]">
        <svg width="14" height="14" viewBox="0 0 14 14" fill="none" className="ml-[7px]"><path d="M3 6c1-4 7-5 8-1M11 1v4H7M8 13c3-3 3-6 3-8" stroke="#b5b5b5" strokeWidth="1.200" /></svg>
        <ChevronDown size={12} strokeWidth={1.800} className="ml-[14px] text-[#666]" />
        <div className="ml-[14px] mr-[21px] w-px h-[20px] bg-[#d0d0d0]" />
        {ribbonTabs.map((t, i) => (
          <div key={t.label} className={`${t.width} h-[38px] flex items-center relative shrink-0 ${i === 0 ? 'text-[#2c56b8] font-bold' : ''}`}>
            {t.label}
            {i === 0 && <span className="absolute left-0 top-[28px] w-[26px] h-[2px] bg-[#2c56b8]" />}
          </div>
        ))}
        <div className="mr-[11px] ml-[10px] w-px h-[26px] bg-[#d0d0d0]" />
        <svg width="16" height="14" viewBox="0 0 16 14"><path d="M5 1h3l-5 13H0z" fill="#3a6be8" /><path d="M8 1h2l6 13h-4z" fill="#e85ca8" /></svg>
        <span className="ml-[3px] text-[12px] text-[#444]">WPS AI</span>
        <Search size={17} strokeWidth={1.100} className="ml-[14px] text-[#555]" />
      </div>

      {/* Ribbon toolbar */}
      <div className="h-[74px] bg-white shadow-[0_1px_3px_rgba(0,0,0,0.12)] flex shrink-0 relative z-10 pt-[8px] text-[#555]">
        <div className="w-[254px] border-r border-[#e4e4e4] flex flex-col relative">
          <div className="flex items-center h-[28px]">
            <div className="w-[114px] h-[23px] border border-l-0 border-[#cfcfcf] rounded-r flex">
              <div className="w-[52px] border-r border-[#cfcfcf] flex items-center justify-end pr-[3px]"><ChevronDown size={12} strokeWidth={1} /></div>
              <div className="flex-1 flex items-center justify-end pr-[5px]"><ChevronDown size={12} strokeWidth={1} /></div>
            </div>
            <span className="ml-[11px] text-[15px] leading-[15px]">A<sup className="text-[10px]">+</sup></span>
            <span className="ml-[13px] text-[15px] leading-[15px]">A<sup className="text-[10px]">-</sup></span>
            <span className="ml-[14px] w-[16px] flex flex-col items-center leading-none">
              <span className="text-[7px]">wén</span>
              <span className="text-[11px]">文</span>
            </span>
            <span className="ml-[1px]"><Chev /></span>
            <svg width="16" height="16" viewBox="0 0 16 16" fill="none" stroke="#555" className="ml-[16px]"><path d="m6 3-4 4 3 4h4l5-5-3-4zM1 14h14" /></svg>
          </div>
          <div className="flex items-center h-[28px]">
            <Chev />
            <span className="ml-[15px] text-[14px] line-through">A</span>
            <span className="ml-[6px]"><Chev /></span>
            <span className="ml-[13px] text-[14px]">X<sup className="text-[9px]">2</sup></span>
            <span className="ml-[3px]"><Chev /></span>
            <span className="ml-[13px] text-[17px] text-[#c4c4c4]">A</span>
            <span className="ml-[4px]"><Chev /></span>
            <span className="ml-[13px] relative w-[16px] h-[18px] text-[12px] leading-[14px] text-center">A<span className="absolute left-0 bottom-0 w-[16px] h-[5px] rounded-sm bg-[#e2211c]" /></span>
            <span className="ml-[3px]"><Chev /></span>
            <span className="ml-[11px] relative w-[16px] h-[18px] text-[12px] leading-[14px] text-center">A<span className="absolute left-0 bottom-0 w-[16px] h-[5px] rounded-sm bg-[#1218cc]" /></span>
            <span className="ml-[3px]"><Chev /></span>
            <span className="ml-[14px] w-[14px] h-[15px] bg-[#d6d6d6] text-[12px] leading-[15px] text-center">A</span>
          </div>
          <svg width="6" height="6" viewBox="0 0 6 6" fill="none" stroke="#666" className="absolute right-[6px] bottom-[3px]"><path d="M0 0l6 6M6 2v4H2" /></svg>
        </div>
        <div className="pl-[13px] flex flex-col">
          <div className="flex items-center h-[28px]">
            <Lines kind="bullet" /><span className="ml-[3px]"><Chev /></span>
            <span className="ml-[12px]"><Lines kind="number" /></span><span className="ml-[3px]"><Chev /></span>
          </div>
          <div className="flex items-center h-[28px] gap-[12px] ml-[-3px]">
            <Lines kind="left" /><Lines kind="center" /><Lines kind="right" />
          </div>
        </div>
      </div>

      {/* Work area */}
      <div className="flex-1 min-h-0 flex">
        <div className="w-[75px] border-r border-[#d4d4d4] shrink-0 flex flex-col items-end">
          <X size={15} strokeWidth={1} className="mt-[17px] mr-[17px] text-[#444]" />
          <div className="mt-[24px] mr-[12px] h-[23px] bg-white rounded-r-[3px] border border-l-0 border-[#d4d4d4] pr-[5px] pl-0 flex items-center text-[12px] text-[#333] whitespace-nowrap">能识别目录</div>
        </div>
        <div className="flex-1 flex justify-start pl-[370px]">
          <div className="w-[792px] h-full bg-white" />
        </div>
      </div>

      {/* Status bar */}
      <div className="h-[24px] border-t border-[#d0d0d0] flex items-center text-[12px] text-[#444] shrink-0">
        <span className="ml-[2px] whitespace-nowrap">: 打开</span>
        <span className="ml-[5px]"><Chev /></span>
        <div className="ml-[12px] w-px h-[16px] bg-[#d4d4d4]" />
        <span className="ml-[13px]">校对</span>
        <div className="ml-[12px] w-px h-[16px] bg-[#d4d4d4]" />
        <span className="ml-[12px]">兼容模式</span>
        <div className="flex-1" />
        <Eye size={15} strokeWidth={1.200} />
        <div className="ml-[23px] w-[22px] h-[23px] bg-[#d2d2d2] rounded-[3px] flex items-center justify-center">
          <svg width="13" height="14" viewBox="0 0 13 14" fill="none" stroke="#444"><rect x="1" y="1" width="11" height="12" /><path d="M4 5h5M4 8h5" /></svg>
        </div>
        <span className="ml-[13px]"><svg width="14" height="14" viewBox="0 0 14 14" fill="none" stroke="#444"><path d="M1 2h1M5 2h8M4 5h9M4 8h9M1 11h1M5 11h8" /></svg></span>
        <Play size={14} strokeWidth={1.200} className="ml-[20px]" />
        <Globe size={14} strokeWidth={1.100} className="ml-[17px]" />
        <PenLine size={14} strokeWidth={1.200} className="ml-[18px]" />
        <Maximize size={14} strokeWidth={1.200} className="ml-[27px]" />
        <span className="ml-[21px] mr-[4px] text-[#666]">100%</span>
      </div>

      {/* Taskbar */}
      <div className="h-[48px] bg-[#dcdcdc] border-t border-[#d0d0d0] flex items-center shrink-0">
        <div className="flex ml-[-5px]">
          {dock.map((d, i) => (
            <div key={i} className="w-[44px] h-[48px] flex items-start justify-center relative">
              {d.active && <span className="absolute left-[3px] top-[4px] w-[38px] h-[38px] bg-[#efefef] rounded" />}
              <span className="relative mt-[10px]">{d.icon}</span>
              {d.active && <span className="absolute left-[14px] top-[39px] w-[16px] h-[3px] rounded bg-[#1773c4]" />}
              {d.dot && <span className="absolute left-[19px] top-[40px] w-[6px] h-[3px] rounded bg-[#777]" />}
            </div>
          ))}
        </div>
        <div className="flex-1" />
        <ChevronUp size={15} strokeWidth={1.800} className="text-[#222]" />
        <svg width="18" height="18" viewBox="0 0 18 18" className="ml-[8px]"><circle cx="9" cy="9" r="8" fill="#e0c32a" /><path d="M3 13a8 8 0 0 0 12 1" stroke="#2d9d4d" strokeWidth="2.500" fill="none" /><path d="M9 5v8M5 9h8" stroke="#2d7a3d" strokeWidth="1.600" /></svg>
        <svg width="14" height="20" viewBox="0 0 14 20" fill="none" stroke="#3b67b8" strokeWidth="1.200" className="ml-[12px]"><rect x="4" y="1" width="6" height="12" rx="3" /><path d="M1 9a6 6 0 0 0 12 0M7 15v4" /></svg>
        <span className="ml-[20px] w-[7px] shrink-0 overflow-hidden whitespace-nowrap text-[14px] text-[#333]">中</span>
      </div>

      <BrowserWindow />
    </div>
  );
}
